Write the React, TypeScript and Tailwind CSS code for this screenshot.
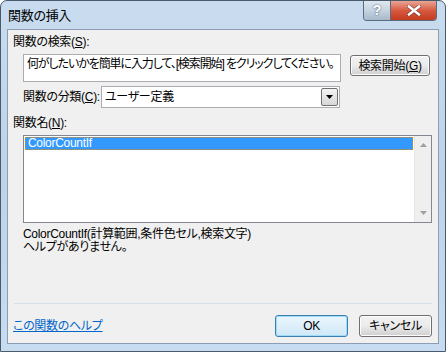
import React from "react";

const font = { fontFamily: '"Liberation Sans", "Noto Sans CJK JP", sans-serif' };

function Btn({ children, focused, className }: { children: React.ReactNode; focused?: boolean; className?: string }) {
  return (
    <div
      className={
        "flex items-center justify-center rounded-[3px] border text-[12px] text-black " +
        (focused
          ? "border-[#3c7fb1] bg-gradient-to-b from-[#eaf6fd] to-[#d0e8f8] shadow-[inset_0_0_0_1px_#9fdcf8] "
          : "border-[#707070] bg-gradient-to-b from-[#f2f2f2] via-[#ebebeb] to-[#cfcfcf] shadow-[inset_0_0_0_1px_#fcfcfc] ") +
        (className ?? "")
      }
    >
      {children}
    </div>
  );
}

export default function App() {
  return (
    <div className="w-[446px] h-[352px] bg-white [font-feature-settings:'palt'] tracking-[-0.3px]" style={font}>
      <div className="w-[446px] h-[352px] flex flex-col rounded-t-[7px] border border-[#4a5a6b] bg-gradient-to-b from-[#c9dcef] via-[#bcd3ea] to-[#c7dcf1] overflow-hidden">
        {/* title bar */}
        <div className="h-[28px] flex items-start shrink-0">
          <div className="pl-[7px] pt-[7px] text-[13px] leading-[16px] text-black">関数の挿入</div>
          <div className="ml-auto mr-[8px] flex h-[20px] rounded-b-[4px] border border-t-0 border-[#5b6b80] overflow-hidden">
            <div className="w-[27px] flex items-center justify-center border-r border-[#5b6b80] bg-gradient-to-b from-[#dfe8f1] via-[#c5d3e0] to-[#a7b9cb] text-white text-[14px] font-bold [text-shadow:0_0_2px_#3a4a5a]">
              ?
            </div>
            <div className="w-[45px] flex items-center justify-center bg-gradient-to-b from-[#e7a596] via-[#d7593f] to-[#c23a1e]">
              <svg width="14" height="11" viewBox="0 0 14 11">
                <path d="M2 1.5 L12 9.5 M12 1.5 L2 9.5" stroke="#3a2020" strokeWidth="4" strokeLinecap="square" opacity="0.5" />
                <path d="M2 1.5 L12 9.5 M12 1.5 L2 9.5" stroke="#ffffff" strokeWidth="2.5" strokeLinecap="square" />
              </svg>
            </div>
          </div>
        </div>
        {/* client */}
        <div className="flex-1 mx-[6px] mb-[7px] border border-[#8e9eb2] bg-[#f0f0f0] flex flex-col text-[12px] leading-[14px] text-black">
          <div className="pl-[5px] pt-[5px]">
            関数の検索(<span className="underline">S</span>):
          </div>
          <div className="flex items-start mt-[5px]">
            <div className="ml-[15px] w-[318px] h-[28px] border border-[#abadb3] bg-white pl-[3px] pt-[2px] whitespace-nowrap overflow-hidden tracking-[-1.1px]">
              何がしたいかを簡単に入力して、[検索開始] をクリックしてください。
            </div>
            <Btn className="ml-[9px] mt-[1px] w-[80px] h-[21px]">
              検索開始(<span className="underline">G</span>)
            </Btn>
          </div>
          <div className="flex items-center mt-[4px]">
            <div className="ml-[15px] w-[78px] whitespace-nowrap">
              関数の分類(<span className="underline">C</span>):
            </div>
            <div className="w-[239px] h-[22px] border border-[#abadb3] bg-white flex items-center">
              <span className="pl-[3px] flex-1">ユーザー定義</span>
              <div className="w-[17px] h-[18px] mr-[1px] border border-[#707070] rounded-[2px] bg-gradient-to-b from-[#f4f4f4] to-[#d6d6d6] flex items-center justify-center">
                <svg width="7" height="4" viewBox="0 0 7 4">
                  <path d="M0 0 H7 L3.5 4 Z" fill="#000" />
                </svg>
              </div>
            </div>
          </div>
          <div className="pl-[5px] mt-[8px]">
            関数名(<span className="underline">N</span>):
          </div>
          <div className="ml-[15px] mt-[5px] w-[409px] h-[88px] border border-[#828790] bg-white flex">
            <div className="flex-1 p-[1px]">
              <div className="h-[13px] bg-[#3399ff] text-white leading-[13px] pl-[2px] border border-dotted border-[#e08a00] flex items-center">
                ColorCountIf
              </div>
            </div>
            <div className="w-[17px] bg-[#efefef] border-l border-[#e6e6e6] flex flex-col items-center justify-between py-[7px]">
              <svg width="7" height="4" viewBox="0 0 7 4">
                <path d="M0 4 H7 L3.5 0 Z" fill="#a0a0a0" />
              </svg>
              <svg width="7" height="4" viewBox="0 0 7 4">
                <path d="M0 0 H7 L3.5 4 Z" fill="#a0a0a0" />
              </svg>
            </div>
          </div>
          <div className="pl-[15px] mt-[5px] leading-[13px]">ColorCountIf(計算範囲,条件色セル,検索文字)</div>
          <div className="pl-[15px] leading-[13px]">ヘルプがありません。</div>
          <div className="flex-1" />
          <div className="mx-[6px] h-px bg-[#d5dfe5]" />
          <div className="flex items-center pl-[5px] pr-[6px] pt-[11px] pb-[6px]">
            <span className="text-[#0066cc] underline">この関数のヘルプ</span>
            <Btn focused className="ml-auto w-[73px] h-[22px]">
              OK
            </Btn>
            <Btn className="ml-[11px] w-[73px] h-[22px]">キャンセル</Btn>
          </div>
        </div>
      </div>
    </div>
  );
}
